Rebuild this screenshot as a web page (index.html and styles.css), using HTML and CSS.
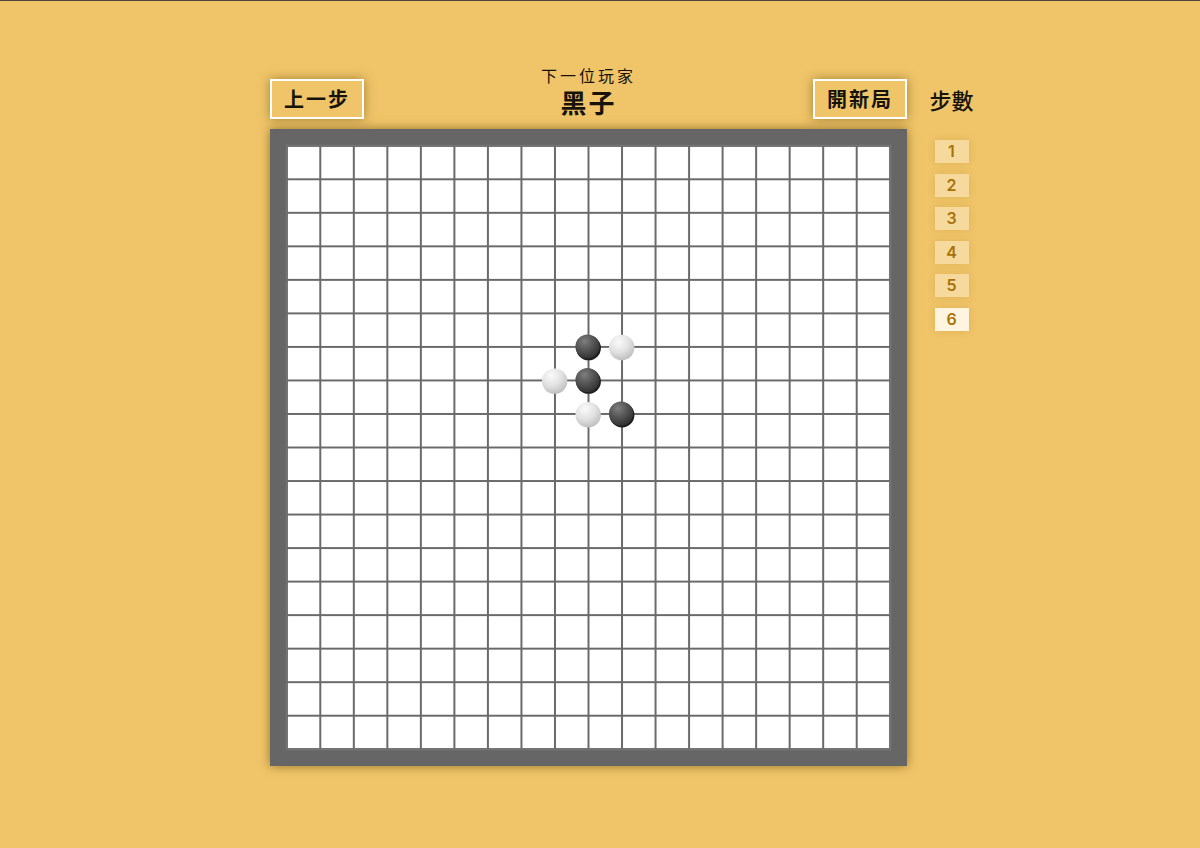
FILE: index.html
```html
<!DOCTYPE html>
<html lang="zh-Hant">
<head>
<meta charset="utf-8">
<meta name="viewport" content="width=device-width, initial-scale=1">
<title>五子棋</title>
<link rel="stylesheet" href="styles.css">
</head>
<body>
<main class="page">
  <section class="game">
    <header class="toolbar">
      <button type="button" class="action">上一步</button>
      <div class="turn">
        <p class="turn-label">下一位玩家</p>
        <h1 class="turn-player">黑子</h1>
      </div>
      <button type="button" class="action">開新局</button>
    </header>
    <svg class="board" viewBox="0 0 1900 1900" role="img" aria-label="棋盤">
      <defs>
        <radialGradient id="black" cx="0.38" cy="0.28" r="0.75">
          <stop offset="0" stop-color="#7e7e7e"/>
          <stop offset="0.5" stop-color="#555"/>
          <stop offset="1" stop-color="#303030"/>
        </radialGradient>
        <radialGradient id="white" cx="0.38" cy="0.28" r="0.8">
          <stop offset="0" stop-color="#fafafa"/>
          <stop offset="0.5" stop-color="#e2e2e2"/>
          <stop offset="1" stop-color="#b8b8b8"/>
        </radialGradient>
        <pattern id="cell" x="50" y="50" width="100" height="100" patternUnits="userSpaceOnUse">
          <path class="line" d="M0 0H100V100H0Z"/>
        </pattern>
      </defs>
      <rect class="field" x="50" y="50" width="1800" height="1800"/>
      <rect x="50" y="50" width="1800" height="1800" fill="url(#cell)"/>
      <g class="stone-black">
        <circle class="rim" cx="950" cy="653" r="37"/><circle cx="947" cy="649" r="36"/>
        <circle class="rim" cx="950" cy="753" r="37"/><circle cx="947" cy="749" r="36"/>
        <circle class="rim" cx="1050" cy="853" r="37"/><circle cx="1047" cy="849" r="36"/>
      </g>
      <g class="stone-white">
        <circle cx="1049" cy="652" r="38"/>
        <circle cx="849" cy="752" r="38"/>
        <circle cx="949" cy="852" r="38"/>
      </g>
    </svg>
  </section>
  <aside class="history">
    <h2 class="history-title">步數</h2>
    <ol class="steps">
      <li><button type="button" class="step">1</button></li>
      <li><button type="button" class="step">2</button></li>
      <li><button type="button" class="step">3</button></li>
      <li><button type="button" class="step">4</button></li>
      <li><button type="button" class="step">5</button></li>
      <li><button type="button" class="step step-current" aria-current="step">6</button></li>
    </ol>
  </aside>
</main>
</body>
</html>
```

FILE: styles.css
```css
* { box-sizing: border-box; }

body {
  margin: 0;
  min-height: 100vh;
  border-top: 1px solid #4f453c;
  background: #f0c569;
  color: #16130c;
  font-family: "Noto Sans CJK TC", "Liberation Sans", sans-serif;
}

.page {
  display: flex;
  justify-content: center;
  align-items: flex-start;
  gap: 22px;
  padding: 64px 0 64px 44px;
}

.game { width: 637px; min-width: 0; }

.toolbar {
  display: flex;
  justify-content: space-between;
  align-items: flex-end;
  height: 64px;
  padding-bottom: 10px;
}

.action {
  width: 94px;
  height: 40px;
  padding: 0;
  border: 2px solid #fff;
  background: #f0c569;
  color: inherit;
  font: bold 20px/24px "Noto Sans CJK TC", sans-serif;
  letter-spacing: 2px;
  box-shadow: 0 0 10px rgba(90, 60, 0, 0.5);
  cursor: pointer;
}

.turn {
  padding-bottom: 2px;
  text-align: center;
}

.turn-label {
  margin: 0;
  font-size: 16px;
  line-height: 24px;
  letter-spacing: 3px;
}

.turn-player {
  margin: 0;
  font-size: 26px;
  line-height: 30px;
  letter-spacing: 2px;
}

.board {
  display: block;
  width: 100%;
  background: #666;
  box-shadow: 0 0 10px rgba(90, 60, 0, 0.6);
}

.field { fill: #fff; stroke: #777; stroke-width: 6; }
.line { fill: none; stroke: #6a6a6a; stroke-width: 6; }
.stone-black { fill: url(#black); }
.stone-white { fill: url(#white); }
.rim { fill: #1c1c1c; }

.history { width: 45px; padding-top: 18px; }

.history-title {
  margin: 0;
  font-size: 22px;
  font-weight: 500;
  line-height: 32px;
  text-align: center;
  white-space: nowrap;
}

.steps {
  display: grid;
  grid-template-rows: repeat(6, 1fr);
  place-items: center;
  height: 201px;
  margin: 20px 0 0;
  padding: 0;
  list-style: none;
}

.steps li { display: flex; }

.step {
  width: 34px;
  height: 23px;
  padding: 0;
  border: 0;
  background: #f6d99d;
  color: #a87208;
  font: 600 16px/23px Inter, "Liberation Sans", sans-serif;
  box-shadow: 0 0 8px rgba(150, 100, 0, 0.2);
  cursor: pointer;
}

.step-current { background: #fff4e0; }
```
